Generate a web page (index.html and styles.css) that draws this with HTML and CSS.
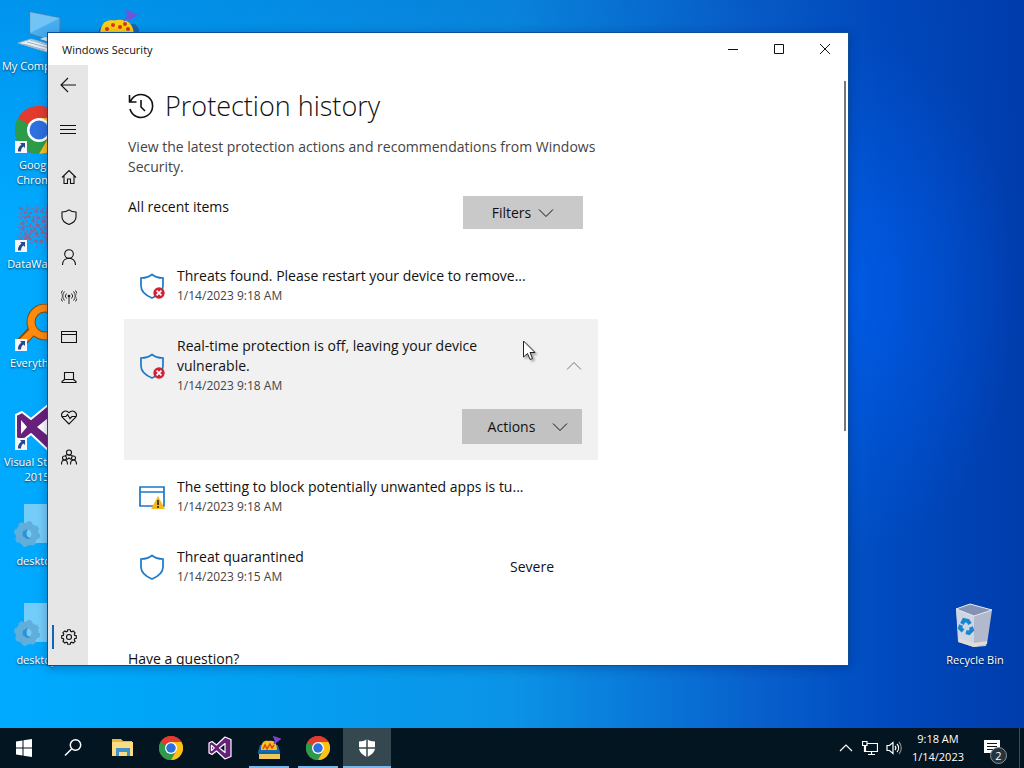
FILE: index.html
```html
<!DOCTYPE html>
<html lang="en">
	<head>
		<meta charset="UTF-8" />
		<meta name="viewport" content="width=device-width, initial-scale=1.0" />
		<title>Windows Security</title>
		<link rel="stylesheet" href="styles.css">
	</head>

	<body>
		<svg class="sprite" aria-hidden="true">
			<symbol id="chrome" viewBox="0 0 48 48">
				<circle cx="24" cy="24" r="24" fill="#e33b2e" />
				<path d="M24 24 3.2 12A24 24 0 0 0 24 48l10.4-18z" fill="#2c9c4b" />
				<path d="M24 48a24 24 0 0 0 20.8-36H24l10.4 18z" fill="#fbc316" />
				<path d="M3.2 12A24 24 0 0 1 44.8 12H24L13.600 18z" fill="#e33b2e" />
				<circle cx="24" cy="24" r="12" fill="#fff" />
				<circle cx="24" cy="24" r="9.500" fill="#2d70de" />
			</symbol>
			<symbol id="vs" viewBox="0 0 24 24">
				<path d="M17 1 23 3.500v17L17 23l-8.500-8L4 18.500 1 17V7l3-1.500L8.500 9zM17 7.500 11.500 12l5.500 4.500zM3.500 9.500v5L6.200 12z" fill="#68217a" fill-rule="evenodd" stroke="#fff" stroke-width="1.200" stroke-linejoin="round" />
			</symbol>
			<symbol id="pizza" viewBox="0 0 24 24">
				<path d="M3 9 1 16h22L21 9z" fill="#1967ad" />
				<path d="M4 14C4 5 8 4 12 5c5-1 8 2 8 9z" fill="#f8c51c" />
				<path d="m6 13 2-4 2 4 3-5 2 4 2-3" fill="none" stroke="#df4716" stroke-width="1.500" />
				<path d="M17 8 20 3M17 1l6 2-4 3z" fill="#7e42ca" stroke="#7e42ca" stroke-width="1.500" />
				<path d="M1 16h22v2H1z" fill="#0b65a5" />
				<path d="M2 18h21v5H2z" fill="#efc65a" />
			</symbol>
			<symbol id="shortcut" viewBox="0 0 12 12">
				<path d="M0 0h12v12H0z" fill="#f4f6fa" />
				<path d="M5 2h5v5L8.500 5.500C6.500 7 6 8 6 10.500H3C2.500 8 4 5.500 6.500 3.500z" fill="#28488c" />
			</symbol>
			<symbol id="shield" viewBox="0 0 26 26">
				<path d="M13 1.500C10 4 6 5 2 5v8c0 5.500 5 9.500 11 12 6-2.500 11-6.500 11-12V5c-4 0-8-1-11-3.500z" fill="none" stroke="#1d78c6" stroke-width="1.700" />
			</symbol>
			<symbol id="error-badge" viewBox="0 0 12 12">
				<circle cx="6" cy="6" r="5.700" fill="#cf2334" />
				<path d="m3.600 3.600 4.800 4.800m0-4.800L3.600 8.400" stroke="#fff" stroke-width="1.700" />
			</symbol>
			<symbol id="gear" viewBox="0 0 16 16">
				<path d="M6.400 2.300 6.700.7h2.600l.3 1.600 1.300.5 1.400-.9 1.800 1.900-.9 1.300.5 1.300 1.600.3v2.600l-1.600.3-.5 1.300.9 1.400-1.900 1.800-1.300-.9-1.300.5-.3 1.600H6.700l-.3-1.600-1.300-.5-1.400.9-1.800-1.900.9-1.300-.5-1.300-1.600-.3V6.700l1.600-.3.5-1.300-.9-1.400 1.900-1.800 1.300.9z" />
				<circle cx="8" cy="8" r="2.500" />
			</symbol>
			<symbol id="ini-file" viewBox="0 0 48 48">
				<path d="M11 2h35v39H11z" fill="#74cdf8" />
				<path d="M35 2h11v9z" fill="#3ba8e5" />
				<circle cx="14" cy="32" r="8" fill="none" stroke="#60aedb" stroke-width="7" />
				<circle cx="14" cy="32" r="11" fill="none" stroke="#60aedb" stroke-width="4" stroke-dasharray="4.320 4.320" />
				<path d="M15 27a5 5 0 1 0 3 9c-4 0-6-4-3-9z" fill="#348fcd" />
			</symbol>
			<symbol id="chevron" viewBox="0 0 16 10">
				<path d="m1 1.500 7 7 7-7" fill="none" stroke="currentColor" />
			</symbol>
		</svg>

		<div class="desktop">
			<div class="desktop-icons">
				<a class="shortcut" href="#">
					<svg viewBox="0 0 48 48">
						<path d="m17 5 30 6v25l-30-9z" fill="#47aef0" stroke="#4d7fa5" />
						<path d="m17 5 30 6-30 15z" fill="#8fd0fa" opacity=".6" />
						<path d="m5 36 13-4 24 7-8 6z" fill="#e7edf2" stroke="#8fb3cc" />
						<path d="m10 37 22 6m-18-8 22 6m-19-8 21 6" stroke="#9db5c6" />
						<path d="m27 32 5-2 16 5v4z" fill="#d8e6ef" />
					</svg>
					My Computer
				</a>
				<a class="shortcut" href="#">
					<svg viewBox="0 0 48 48">
						<use href="#chrome" x="2" width="48" height="48" />
						<use href="#shortcut" x="2" y="35" width="12" height="12" />
					</svg>
					Google Chrome
				</a>
				<a class="shortcut" href="#">
					<svg viewBox="0 0 48 48">
						<g fill="none" stroke="#5a7fc0" stroke-width="2" stroke-dasharray="3 2">
							<path d="M8 4h34v34H8zM4 12h42M4 22h42M4 32h42M14 0v44M24 0v44M34 0v44" />
						</g>
						<g fill="none" stroke="#8f6290" stroke-width="2" stroke-dasharray="4 2">
							<circle cx="25" cy="21" r="8" />
							<circle cx="25" cy="21" r="15" />
							<path d="m6 2 38 38M44 2 6 40" />
						</g>
						<use href="#shortcut" x="2" y="35" width="12" height="12" />
					</svg>
					DataWagon
				</a>
				<a class="shortcut" href="#">
					<svg viewBox="0 0 48 48">
						<path d="m18 28-11 12" stroke="#7a4c16" stroke-width="10" />
						<circle cx="32" cy="18" r="14" fill="none" stroke="#7a4c16" stroke-width="9" />
						<path d="m21 26-13 13" stroke="#ff8a0c" stroke-width="7" />
						<circle cx="32" cy="18" r="14" fill="none" stroke="#ff8a0c" stroke-width="7" />
						<use href="#shortcut" x="2" y="35" width="12" height="12" />
					</svg>
					Everything
				</a>
				<a class="shortcut" href="#">
					<svg viewBox="0 0 48 48">
						<path d="M35 2 47 7v35l-12 5-17-16-9 7-6-3V12l6-3 9 7z" fill="#68217a" stroke="#fff" stroke-width="2" stroke-linejoin="round" />
						<path d="M35 15 24 24l11 9zM8 17v14l6-7z" fill="#fff" />
						<use href="#shortcut" x="2" y="35" width="12" height="12" />
					</svg>
					Visual Studio 2015
				</a>
				<a class="shortcut" href="#">
					<svg><use href="#ini-file" /></svg>
					desktop
				</a>
				<a class="shortcut" href="#">
					<svg><use href="#ini-file" /></svg>
					desktop
				</a>
				<a class="shortcut" href="#" aria-label="Pizza">
					<svg viewBox="0 0 48 48">
						<path d="M6 22 10 17h32l4 5v20H4z" fill="#1b63a8" />
						<path d="M7 30C7 10 18 14 24 13c9-1 17 2 17 17z" fill="#fbcd13" />
						<path d="M31 14 35 9M34 4l9 4-7 4z" fill="#6f55d8" stroke="#6f55d8" stroke-width="2" />
						<g fill="#d3381a">
							<circle cx="14" cy="22" r="2" />
							<circle cx="20" cy="18" r="2" />
							<circle cx="27" cy="20" r="2" />
							<circle cx="32" cy="17" r="2" />
							<circle cx="35" cy="22" r="2" />
						</g>
					</svg>
				</a>
			</div>

			<a class="shortcut recycle-bin" href="#">
				<svg viewBox="0 0 48 48">
					<path d="m5 8 14-5 21 6-5 36-12 1-16-5z" fill="#c6cddd" />
					<path d="m5 8 18 7v31L8 41z" fill="#d0d5e2" />
					<path d="m23 15 18-6-5 34-13 3z" fill="#b2b9cc" />
					<path d="m5 8 14-5 22 6-18 6z" fill="#8493b5" stroke="#e3e8f2" />
					<path d="m8 37 15 5 13-2v3l-13 3-15-5z" fill="#e2dcd5" />
					<path d="m11 23 2-4 4 1 2 3m1 3 1 3-3 3-3-1m-3-1-3-3 1-3" fill="none" stroke="#1685d2" stroke-width="4" />
				</svg>
				Recycle Bin
			</a>

			<main class="window">
				<header class="title-bar">
					<span class="title">Windows Security</span>
					<button aria-label="Minimize"><svg viewBox="0 0 12 12"><path d="M1 6.500h10" /></svg></button>
					<button aria-label="Maximize"><svg viewBox="0 0 12 12"><path d="M1.500 1.500h9v9h-9z" /></svg></button>
					<button aria-label="Close"><svg viewBox="0 0 12 12"><path d="m1 1 10 10m0-10L1 11" /></svg></button>
				</header>

				<div class="window-body">
					<nav class="side-nav">
						<button aria-label="Back"><svg viewBox="0 0 16 16"><path d="M16 8H1m7-7L1 8l7 7" /></svg></button>
						<button class="menu" aria-label="Menu"><svg viewBox="0 0 16 16"><path d="M0 4.500h16M0 8.500h16M0 12.500h16" /></svg></button>
						<button aria-label="Home"><svg viewBox="0 0 16 16"><path d="m1 8.500 7-7 7 7M3 7v7.500h3.500V10h3v4.500H13V7" /></svg></button>
						<button aria-label="Virus and threat protection"><svg viewBox="0 0 16 16"><path d="M8 .8C6 2.500 3.500 3 1 3v5c0 3.500 3 6 7 7.500 4-1.500 7-4 7-7.500V3c-2.500 0-5-.5-7-2.200z" /></svg></button>
						<button aria-label="Account protection"><svg viewBox="0 0 16 16"><circle cx="8" cy="5" r="4.300" /><path d="M1.500 16c0-4.500 3-6.700 6.500-6.700s6.500 2.200 6.500 6.700" /></svg></button>
						<button aria-label="Firewall and network protection"><svg viewBox="0 0 16 16"><path d="M8 7v8M5.500 9.500a3.500 3.500 0 0 1 0-5m5 0a3.500 3.500 0 0 1 0 5M3.500 11.500a6.500 6.500 0 0 1 0-9m9 0a6.500 6.500 0 0 1 0 9M1.500 12.500a8.500 8.500 0 0 1 0-11m13 0a8.500 8.500 0 0 1 0 11" stroke-width=".9" /><circle cx="8" cy="7" r=".8" /></svg></button>
						<button aria-label="App and browser control"><svg viewBox="0 0 16 16"><path d="M.5 2.500h15v11H.5zM.5 5.500h15" /></svg></button>
						<button aria-label="Device security"><svg viewBox="0 0 16 16"><path d="M3.500 3.500h9v7h-9zM3.500 10.500l-2.500 2v1h14v-1l-2.500-2" /></svg></button>
						<button aria-label="Device performance and health"><svg viewBox="0 0 16 16"><path d="M8 15 1.500 8.500c-3-4 2.500-9 6.500-4.800 4-4.200 9.500.8 6.500 4.800zM1 7.500h4l1.500-2 2.500 4 2-2h4" /></svg></button>
						<button aria-label="Family options"><svg viewBox="0 0 16 16"><circle cx="8" cy="3.500" r="2.500" /><circle cx="3.500" cy="9" r="2" /><circle cx="12.500" cy="9" r="2" /><path d="M.5 15.500c0-6 6-6 6 0m3 0c0-6 6-6 6 0M4.500 7c0-1 1.500-1.500 3.500-1s3.500 0 3.500 1M6 10.500l2-1.500 2 1.500" /></svg></button>
						<button class="settings" aria-label="Settings"><svg><use href="#gear" /></svg></button>
					</nav>

					<section class="content">
						<h1>
							<svg viewBox="0 0 26 26"><path d="M2.500 8.500A11.500 11.500 0 1 1 2 16M1.500 2v7h7M13 7v7l4 4" /></svg>
							Protection history
						</h1>
						<p class="intro">View the latest protection actions and recommendations from Windows Security.</p>
						<div class="filter-row">
							<h2>All recent items</h2>
							<button class="action filters">Filters <svg><use href="#chevron" /></svg></button>
						</div>

						<ul class="history">
							<li class="item">
								<svg class="item-icon" viewBox="0 0 26 26">
									<use href="#shield" width="26" height="26" />
									<use href="#error-badge" x="14" y="14" width="12" height="12" />
								</svg>
								<div class="item-text">
									<h3>Threats found. Please restart your device to remove...</h3>
									<time>1/14/2023 9:18 AM</time>
								</div>
							</li>
							<li class="item open">
								<svg class="item-icon" viewBox="0 0 26 26">
									<use href="#shield" width="26" height="26" />
									<use href="#error-badge" x="14" y="14" width="12" height="12" />
								</svg>
								<div class="item-text">
									<h3>Real-time protection is off, leaving your device vulnerable.</h3>
									<time>1/14/2023 9:18 AM</time>
								</div>
								<button class="collapse" aria-label="Collapse"><svg><use href="#chevron" /></svg></button>
								<button class="action actions">Actions <svg><use href="#chevron" /></svg></button>
							</li>
							<li class="item">
								<svg class="item-icon" viewBox="0 0 26 26">
									<path d="M1 3h24v19H1zM1 8h24" fill="none" stroke="#1d78c6" stroke-width="1.700" />
									<path d="m19 12 7 13H12z" fill="#f5b91c" />
									<path d="M19 16v5m0 1v2" stroke="#4b3206" stroke-width="1.800" />
								</svg>
								<div class="item-text">
									<h3>The setting to block potentially unwanted apps is tu...</h3>
									<time>1/14/2023 9:18 AM</time>
								</div>
							</li>
							<li class="item">
								<svg class="item-icon"><use href="#shield" /></svg>
								<div class="item-text">
									<h3>Threat quarantined</h3>
									<time>1/14/2023 9:15 AM</time>
								</div>
								<span class="severity">Severe</span>
							</li>
						</ul>

						<h2>Have a question?</h2>
					</section>
					<div class="scroll-thumb"></div>
				</div>
			</main>

			<svg class="cursor" viewBox="0 0 14 21">
				<path d="M1.500 1v16l4-3.500 2.500 6 2.500-1-2.500-6h5z" fill="#fff" stroke="#222" />
			</svg>
		</div>

		<footer class="taskbar">
			<button aria-label="Start"><svg viewBox="0 0 24 24"><path d="m4 5.500 6.500-1v7H4zM11.500 4.300 20 3v8.500h-8.500zM4 12.500h6.500v7l-6.500-1zM11.500 12.500H20V21l-8.500-1.300z" fill="#fff" /></svg></button>
			<button aria-label="Search"><svg viewBox="0 0 24 24" fill="none" stroke="#fff" stroke-width="1.500"><circle cx="14.500" cy="9" r="5.200" /><path d="M10.800 12.700 4 19.500" /></svg></button>
			<button aria-label="File Explorer"><svg viewBox="0 0 24 24"><path d="M2 3h9l2 2h9v15H2z" fill="#e9b53c" /><path d="M2 6h21v14H2z" fill="#fbdc83" /><path d="M6 12h14v8h-3v-4H9v4H6z" fill="#3e93cd" /></svg></button>
			<button aria-label="Google Chrome"><svg><use href="#chrome" /></svg></button>
			<button aria-label="Visual Studio"><svg><use href="#vs" /></svg></button>
			<button class="running" aria-label="Pizza"><svg><use href="#pizza" /></svg></button>
			<button class="running" aria-label="Google Chrome window"><svg><use href="#chrome" /></svg></button>
			<button class="running active" aria-label="Windows Security"><svg viewBox="0 0 24 24"><path d="M12 3C9.500 4.800 7 5.500 4 5.500V12c0 4 3.500 7 8 9 4.500-2 8-5 8-9V5.500C17 5.500 14.500 4.800 12 3z" fill="#fff" /><path d="M12 3v18M4 12h16" stroke="#35474f" stroke-width="1.500" /></svg></button>

			<div class="tray">
				<button aria-label="Show hidden icons"><svg viewBox="0 0 16 16"><path d="m2 11 6-6 6 6" /></svg></button>
				<button aria-label="Network"><svg viewBox="0 0 16 16"><path d="M5 3.500h10.500v8H3.500V6M9.500 11.500v3M6 14.500h7M.5 1.500H5v4H.5zM2.500 5.500v6h2" /></svg></button>
				<button aria-label="Volume"><svg viewBox="0 0 16 16"><path d="M1 5.500h2.500L7 2.500v11l-3.500-3H1zM9 6a3 3 0 0 1 0 4m2-6a6 6 0 0 1 0 8" /><path d="M13 2a9 9 0 0 1 0 12" opacity=".5" /></svg></button>
				<time class="clock">9:18 AM<br>1/14/2023</time>
				<button class="notifications" aria-label="Notifications">
					<svg viewBox="0 0 16 16"><path d="M0 0h16v13h-5l-3 3v-3H0z" fill="#fff" stroke="none" /><path d="M3 3.500h10M3 6.500h10M3 9.500h6" stroke="#061722" /></svg>
					<span class="badge">2</span>
				</button>
			</div>
		</footer>
	</body>
</html>
```

FILE: styles.css
```css
* {
	box-sizing: border-box;
}

html, body {
	margin: 0;
	height: 100%;
	font-family: 'Open Sans', 'Noto Sans', sans-serif;
}

body {
	display: flex;
	flex-direction: column;
	overflow: hidden;
	background:
		radial-gradient(ellipse 170px 260px at 83% 38%, rgba(0, 98, 250, .6), transparent),
		linear-gradient(to right, #00aaff 0%, #00a8fa 10%, #0b93e6 50%, #0860cc 74%, #004bc0 86%, #003cac 100%);
}

h1, h2, h3, p, ul {
	margin: 0;
	padding: 0;
	font-weight: 400;
}

button {
	display: flex;
	align-items: center;
	justify-content: center;
	border: 0;
	padding: 0;
	background: none;
	color: inherit;
	font-family: inherit;
}

.sprite {
	position: absolute;
	width: 0;
	height: 0;
}

.desktop {
	position: relative;
	flex: 1;
	min-height: 0;
	background: linear-gradient(rgba(0, 60, 170, .2), transparent 30%);
}

/* desktop shortcuts */

.desktop-icons {
	display: grid;
	grid-template-rows: repeat(7, 99px);
	grid-auto-flow: column;
	grid-auto-columns: 74px;
	column-gap: 6px;
	padding-top: 7px;
}

.shortcut {
	display: flex;
	flex-direction: column;
	align-items: center;
	width: 74px;
	gap: 3px;
	color: #fff;
	font-size: 11px;
	line-height: 15px;
	text-align: center;
	text-decoration: none;
	text-shadow: 0 1px 2px rgba(0, 0, 0, .7);
}

.shortcut svg {
	width: 48px;
	height: 48px;
}

.recycle-bin {
	position: absolute;
	right: 12px;
	bottom: 61px;
}

/* window */

.window {
	position: absolute;
	top: 32px;
	right: 175px;
	bottom: 62px;
	left: 47px;
	display: flex;
	flex-direction: column;
	border: 1px solid #0b4f96;
	background: #fff;
	color: #111;
	box-shadow: 0 2px 10px rgba(0, 20, 80, .3);
}

.title-bar {
	display: flex;
	flex: none;
	height: 32px;
	padding-left: 14px;
	font-size: 11px;
}

.title {
	flex: 1;
	line-height: 34px;
}

.title-bar button {
	width: 46px;
}

.title-bar svg {
	width: 12px;
	height: 12px;
	fill: none;
	stroke: #111;
}

.window-body {
	position: relative;
	display: flex;
	flex: 1;
	min-height: 0;
	overflow: hidden;
}

.side-nav {
	display: flex;
	flex-direction: column;
	flex: none;
	width: 40px;
	padding-bottom: 8px;
	background: #e6e6e6;
}

.side-nav button {
	width: 40px;
	height: 40px;
}

.side-nav svg {
	width: 16px;
	height: 16px;
	fill: none;
	stroke: #111;
	stroke-width: 1.1;
}

.side-nav .menu {
	margin: 4px 0 8px;
}

.side-nav .menu ~ button {
	padding-left: 2px;
}

.side-nav .settings {
	position: relative;
	margin-top: auto;
}

.settings::before {
	content: '';
	position: absolute;
	top: 8px;
	left: 4px;
	width: 2px;
	height: 24px;
	background: #1265bd;
}

.content {
	flex: 1;
	padding: 23px 40px 0;
	font-size: 14px;
	line-height: 20px;
}

.content h1 {
	display: flex;
	align-items: center;
	gap: 11px;
	font-size: 27px;
	font-weight: 300;
	line-height: 36px;
}

h1 svg {
	width: 26px;
	height: 26px;
	fill: none;
	stroke: #111;
	stroke-width: 1.6;
}

.intro {
	max-width: 480px;
	margin-top: 13px;
	color: #444;
}

.content h2 {
	font-size: 14px;
}

.filter-row {
	display: flex;
	align-items: flex-start;
	justify-content: space-between;
	max-width: 455px;
	margin-top: 19px;
}

.filter-row h2 {
	line-height: 22px;
}

.action {
	width: 120px;
	height: 33px;
	background: #c9c9c9;
	font-size: 14px;
}

.action svg,
.collapse svg {
	width: 16px;
	height: 10px;
}

.filters {
	gap: 7px;
}

.actions {
	grid-column: 2 / -1;
	justify-self: end;
	gap: 17px;
	height: 35px;
	margin-top: 13px;
	padding-left: 12px;
	background: #c2c2c2;
}

.history {
	max-width: 474px;
	margin: 20px 0 49px -4px;
	list-style: none;
}

.item {
	display: grid;
	grid-template-columns: 26px 1fr auto;
	column-gap: 12px;
	align-items: center;
	padding: 17px 16px 13px 15px;
}

.item.open {
	padding-bottom: 16px;
	background: #f1f1f1;
}

.item-icon {
	width: 26px;
	height: 26px;
}

.item-text {
	max-width: 356px;
}

.item h3 {
	font-size: 14px;
}

.item time {
	display: block;
	color: #444;
	font-size: 12px;
}

.collapse svg {
	transform: rotate(180deg);
}

.collapse {
	color: #777;
}

.severity {
	padding-right: 28px;
}

.scroll-thumb {
	position: absolute;
	top: 16px;
	right: 2px;
	width: 2px;
	height: 350px;
	background: #777;
}

.cursor {
	position: absolute;
	top: 340px;
	left: 522px;
	width: 14px;
	height: 21px;
	filter: drop-shadow(2px 2px 1px rgba(0, 0, 0, .3));
}

/* taskbar */

.taskbar {
	display: flex;
	flex: none;
	gap: 1px;
	height: 40px;
	background: #031521;
	color: #fff;
}

.taskbar > button {
	width: 48px;
	background: linear-gradient(#7ab8ea, #7ab8ea) center bottom / 0 2px no-repeat;
}

.taskbar > button svg {
	width: 24px;
	height: 24px;
}

.taskbar > .running {
	background-size: 40px 2px;
}

.taskbar > .active {
	background-color: #35474f;
	background-size: 100% 2px;
}

.tray {
	display: flex;
	align-items: center;
	gap: 8px;
	margin-left: auto;
	padding-right: 4px;
}

.tray svg {
	width: 16px;
	height: 16px;
	fill: none;
	stroke: #fff;
	stroke-width: 1.2;
}

.clock {
	padding: 0 2px;
	font-size: 11px;
	line-height: 18px;
	text-align: center;
}

.notifications {
	position: relative;
	width: 46px;
	height: 40px;
	padding-right: 10px;
	border-right: 1px solid #3c4d58;
}

.badge {
	position: absolute;
	right: 12px;
	bottom: 4px;
	width: 17px;
	height: 17px;
	border: 1px solid #89939a;
	border-radius: 50%;
	background: #26343e;
	font-size: 11px;
	line-height: 15px;
}
```
